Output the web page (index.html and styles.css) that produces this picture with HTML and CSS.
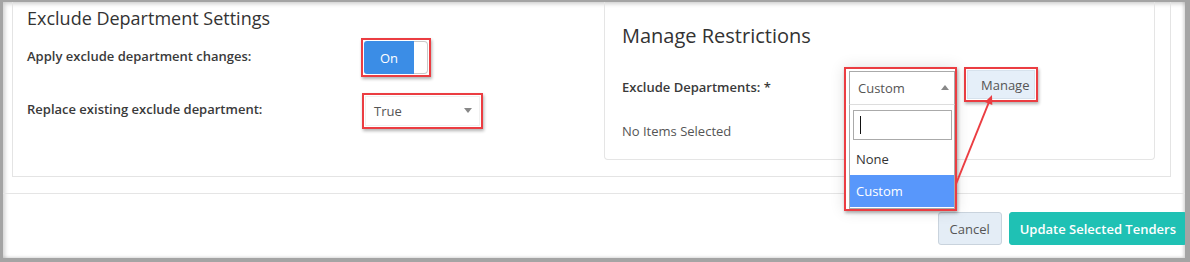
FILE: index.html
```html
<!DOCTYPE html>
<html lang="en">
<head>
    <meta charset="UTF-8">
    <title>Exclude Department Settings</title>
    <link rel="stylesheet" href="styles.css">
</head>
<body>

<div class="shot">
    <div class="modal-body">
        <div class="panel">
            <div class="settings">
                <h3>Exclude Department Settings</h3>
                <div class="row first">
                    <label>Apply exclude department changes:</label>
                    <span class="mark">
                        <span class="toggle"><span class="toggle-on">On</span><span class="knob"></span></span>
                    </span>
                </div>
                <div class="row second">
                    <label>Replace existing exclude department:</label>
                    <span class="mark">
                        <span class="select">True<i class="caret-down"></i></span>
                    </span>
                </div>
            </div>

            <div class="card">
                <h3>Manage Restrictions</h3>
                <div class="card-row">
                    <label>Exclude Departments: *</label>
                    <div class="pick">
                        <div class="mark pick-mark">
                            <div class="pick-head">Custom<i class="caret-up"></i></div>
                            <div class="pick-drop">
                                <div class="search"><span class="cursor"></span></div>
                                <div class="option none">None</div>
                                <div class="option active">Custom</div>
                            </div>
                        </div>
                    </div>
                    <span class="mark manage-mark">
                        <button class="btn-manage">Manage</button>
                    </span>
                </div>
                <p class="empty">No Items Selected</p>
            </div>
        </div>
    </div>

    <div class="footer">
        <button class="btn-cancel">Cancel</button>
        <button class="btn-update">Update Selected Tenders</button>
    </div>

    <svg class="arrow" width="1190" height="262" viewBox="0 0 1190 262">
        <line x1="956" y1="184" x2="989" y2="102" stroke="#eb3d42" stroke-width="2"/>
        <polygon points="992,95 992.3,105 984.9,102" fill="#eb3d42"/>
    </svg>
</div>

</body>
</html>
```

FILE: styles.css
```css
* {
    box-sizing: border-box;
}
body {
    margin: 0;
    background: #fff;
    font-family: "Open Sans", sans-serif;
    font-size: 13px;
    color: #333;
}
.shot {
    position: relative;
    width: 1190px;
    height: 262px;
    overflow: hidden;
    border-style: solid;
    border-color: #a4a4a4;
    border-width: 2px 5px 4px 3px;
    box-shadow: inset 2px 2px 4px rgba(0, 0, 0, 0.18), inset -2px -1px 3px rgba(0, 0, 0, 0.12);
}
.modal-body {
    padding: 0 14px 16px 9px;
}
.panel {
    display: flex;
    border: 1px solid #e4e4e4;
    border-top: none;
    padding: 0 15px 16px 14px;
}
h3 {
    margin: 0;
    font-weight: 400;
    color: #333;
}
.settings {
    flex: 1;
    padding-top: 4px;
}
.settings h3 {
    font-size: 18px;
    line-height: 24px;
}
.row {
    display: flex;
    align-items: center;
}
.row label {
    width: 334px;
    font-weight: 600;
    color: #3a3a3a;
    margin-bottom: 4px;
}
.row.first {
    margin-top: 8px;
}
.row.second {
    margin-top: 16px;
}
.mark {
    display: inline-flex;
    border: 2px solid #eb3d42;
    padding: 1px;
    box-shadow: 1px 2px 3px rgba(0, 0, 0, 0.3);
    background: #fff;
}
.toggle {
    display: flex;
    width: 64px;
    height: 33px;
}
.toggle-on {
    width: 50px;
    background: #3b8de6;
    color: #fff;
    border-radius: 3px 0 0 3px;
    display: flex;
    align-items: center;
    justify-content: center;
}
.knob {
    width: 14px;
    border: 1px solid #c9c9c9;
    border-left: none;
    border-radius: 0 4px 4px 0;
    background: #fff;
}
.row.second .mark {
    margin-left: 1px;
}
.select {
    position: relative;
    width: 115px;
    height: 30px;
    padding-left: 8px;
    line-height: 28px;
    color: #555;
    border: 1px solid #f0f0f0;
}
.caret-down {
    position: absolute;
    right: 7px;
    top: 11px;
    border-top: 5px solid #888;
    border-left: 4px solid transparent;
    border-right: 4px solid transparent;
}
.card {
    width: 551px;
    border: 1px solid #e5e5e5;
    border-top: none;
    border-radius: 0 0 4px 4px;
    padding: 20px 17px 19px;
}
.card h3 {
    font-size: 20px;
    line-height: 28px;
}
.card-row {
    display: flex;
    align-items: center;
    height: 38px;
    margin-top: 17px;
}
.card-row label {
    width: 222px;
    font-weight: 600;
    color: #3a3a3a;
    margin-top: 2px;
}
.pick {
    position: relative;
    width: 113px;
    height: 38px;
}
.pick-mark {
    position: absolute;
    top: 0;
    left: 0;
    width: 113px;
    height: 144px;
    flex-direction: column;
    padding: 2px 0 0 3px;
    box-shadow: 1px 2px 3px rgba(0, 0, 0, 0.3), 0 0 14px rgba(0, 0, 0, 0.12);
    z-index: 2;
}
.pick-head {
    position: relative;
    height: 34px;
    border: 1px solid #aaa;
    border-bottom-color: #ddd;
    padding-left: 8px;
    line-height: 32px;
    color: #555;
}
.caret-up {
    position: absolute;
    right: 5px;
    top: 13px;
    border-bottom: 5px solid #888;
    border-left: 4px solid transparent;
    border-right: 4px solid transparent;
}
.pick-drop {
    flex: 1;
    border: 1px solid #aaa;
    border-top: none;
    padding-top: 5px;
}
.search {
    height: 30px;
    margin: 0 2px 0 3px;
    border: 1px solid #aaa;
    padding: 5px 0 0 6px;
}
.cursor {
    display: block;
    width: 1px;
    height: 18px;
    background: #111;
}
.option {
    height: 32px;
    line-height: 32px;
    padding-left: 6px;
    color: #333;
}
.option.none {
    height: 35px;
    padding-top: 4px;
    line-height: 31px;
}
.option.active {
    background: #5897fb;
    color: #fff;
}
.manage-mark {
    margin-left: 7px;
    margin-top: -3px;
}
.btn-manage {
    width: 68px;
    height: 29px;
    border: 1px solid #d6e2ed;
    background: #e5eff9;
    color: #555;
    font-family: "Open Sans", sans-serif;
    font-size: 13px;
    text-align: left;
    padding: 0 0 0 13px;
}
.empty {
    margin: 17px 0 0;
    line-height: 18px;
    color: #555;
}
.footer {
    display: flex;
    justify-content: flex-end;
    gap: 7px;
    border-top: 1px solid #e5e5e5;
    padding-top: 18px;
    margin-right: -2px;
}
.footer button {
    height: 33px;
    border-radius: 3px;
    font-family: "Open Sans", sans-serif;
    font-size: 13px;
}
.btn-cancel {
    width: 64px;
    border: 1px solid #c9d3dd;
    background: #e4edf6;
    color: #555;
}
.btn-update {
    border: 1px solid #1fc1b4;
    background: #1fc1b4;
    color: #fff;
    font-weight: 600;
    padding: 0 10px;
}
.arrow {
    position: absolute;
    left: -3px;
    top: -2px;
    pointer-events: none;
    z-index: 3;
}
```
